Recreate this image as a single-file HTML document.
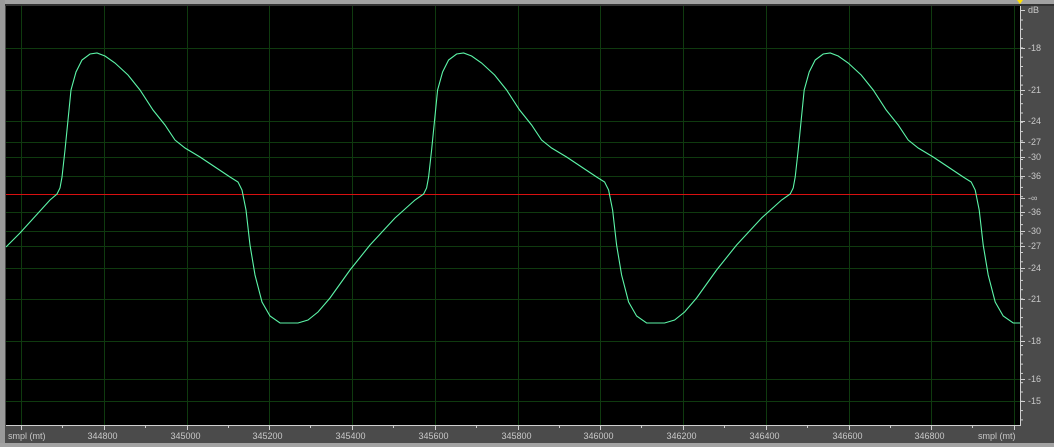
<!DOCTYPE html>
<html><head><style>
body{margin:0;width:1054px;height:447px;background:#4b4b4b;overflow:hidden;position:relative;font-family:"Liberation Sans",sans-serif}
.t{position:absolute;font-size:9px;color:#c8c8c8;white-space:nowrap}
</style></head><body>
<svg width="1054" height="447" style="position:absolute;left:0;top:0">
<rect x="0" y="0" width="1054" height="4" fill="#a2a2a2"/>
<rect x="0" y="4" width="1054" height="2" fill="#333"/>
<rect x="0" y="0" width="5" height="447" fill="#9a9a9a"/>
<rect x="0" y="443" width="1054" height="4" fill="#a2a2a2"/>
<rect x="6" y="6" width="1014" height="419" fill="#000"/>
<g id="grid" stroke="#0f3a0f" stroke-width="1"></g>
<line x1="6" y1="194.5" x2="1020" y2="194.5" stroke="#d81010" stroke-width="1"/>
<polyline id="w" fill="none" stroke="#5cf5a8" stroke-width="1.1"/>
<line x1="1020.5" y1="6" x2="1020.5" y2="426" stroke="#cfcfcf"/>
<line x1="6" y1="425.5" x2="1021" y2="425.5" stroke="#cfcfcf"/>
<g id="ticks" stroke="#cfcfcf"></g>
<polygon points="1017,0 1023,0 1020,4" fill="#ffe000"/>
</svg>
<div id="lab"></div>
<script>
var g=document.getElementById('grid'),tk=document.getElementById('ticks'),lab=document.getElementById('lab');
var ns='http://www.w3.org/2000/svg';
function ln(p,a,b,c,d){var l=document.createElementNS(ns,'line');l.setAttribute('x1',a);l.setAttribute('y1',b);l.setAttribute('x2',c);l.setAttribute('y2',d);p.appendChild(l);}
var hs=[[10,'dB'],[48,'-18'],[90,'-21'],[121,'-24'],[142,'-27'],[157,'-30'],[176,'-36'],[198,'-∞'],[212,'-36'],[231,'-30'],[246,'-27'],[268,'-24'],[299,'-21'],[341,'-18'],[379,'-16'],[401,'-15']];
var h='';
hs.forEach(function(a){var y=a[0];if(a[1]!='-∞'&&a[1]!='dB')ln(g,6,y+.5,1020,y+.5);ln(tk,1021,y+.5,1025,y+.5);h+='<div class="t" style="left:1028px;top:'+(y-5)+'px">'+a[1]+'</div>';});
for(var y=20;y<420;y+=9.3)ln(tk,1021,y,1023,y);
var xl=['344800','345000','345200','345400','345600','345800','346000','346200','346400','346600','346800'];
for(var i=0;i<13;i++){var x=Math.round(21+i*82.75)+.5;ln(g,x,6,x,425);ln(tk,x,426,x,430);if(i>=1&&i<=11)h+='<div class="t" style="left:'+(x-17)+'px;top:431px">'+xl[i-1]+'</div>';ln(tk,x+41,426,x+41,428);}
h+='<div class="t" style="left:8px;top:431px">smpl (mt)</div><div class="t" style="left:978px;top:431px">smpl (mt)</div>';
lab.innerHTML=h;
var P=[[6,247],[20,233],[30,222],[50,200],[57,194],[60,188],[62,177],[65,150],[68,120],[71,90],[76,72],[82,60],[90,54],[97,53],[105,56],[115,63],[128,75],[140,90],[153,110],[165,125],[175,140],[185,148],[200,157],[215,167],[230,177],[238,182],[242,190],[246,210],[250,245],[255,275],[262,302],[270,316],[280,323],[298,323],[308,320],[318,312],[330,298],[350,270],[370,245],[395,218],[415,200]];
var pts=[],T=366.6;
for(var k=0;k<3;k++)P.forEach(function(p){var x=p[0]+k*T;if(k>0&&p[0]<57)return;if(x<=1020)pts.push(x.toFixed(1)+','+p[1]);});
pts.push('1020,323');
document.getElementById('w').setAttribute('points',pts.join(' '));
</script>
</body></html>
